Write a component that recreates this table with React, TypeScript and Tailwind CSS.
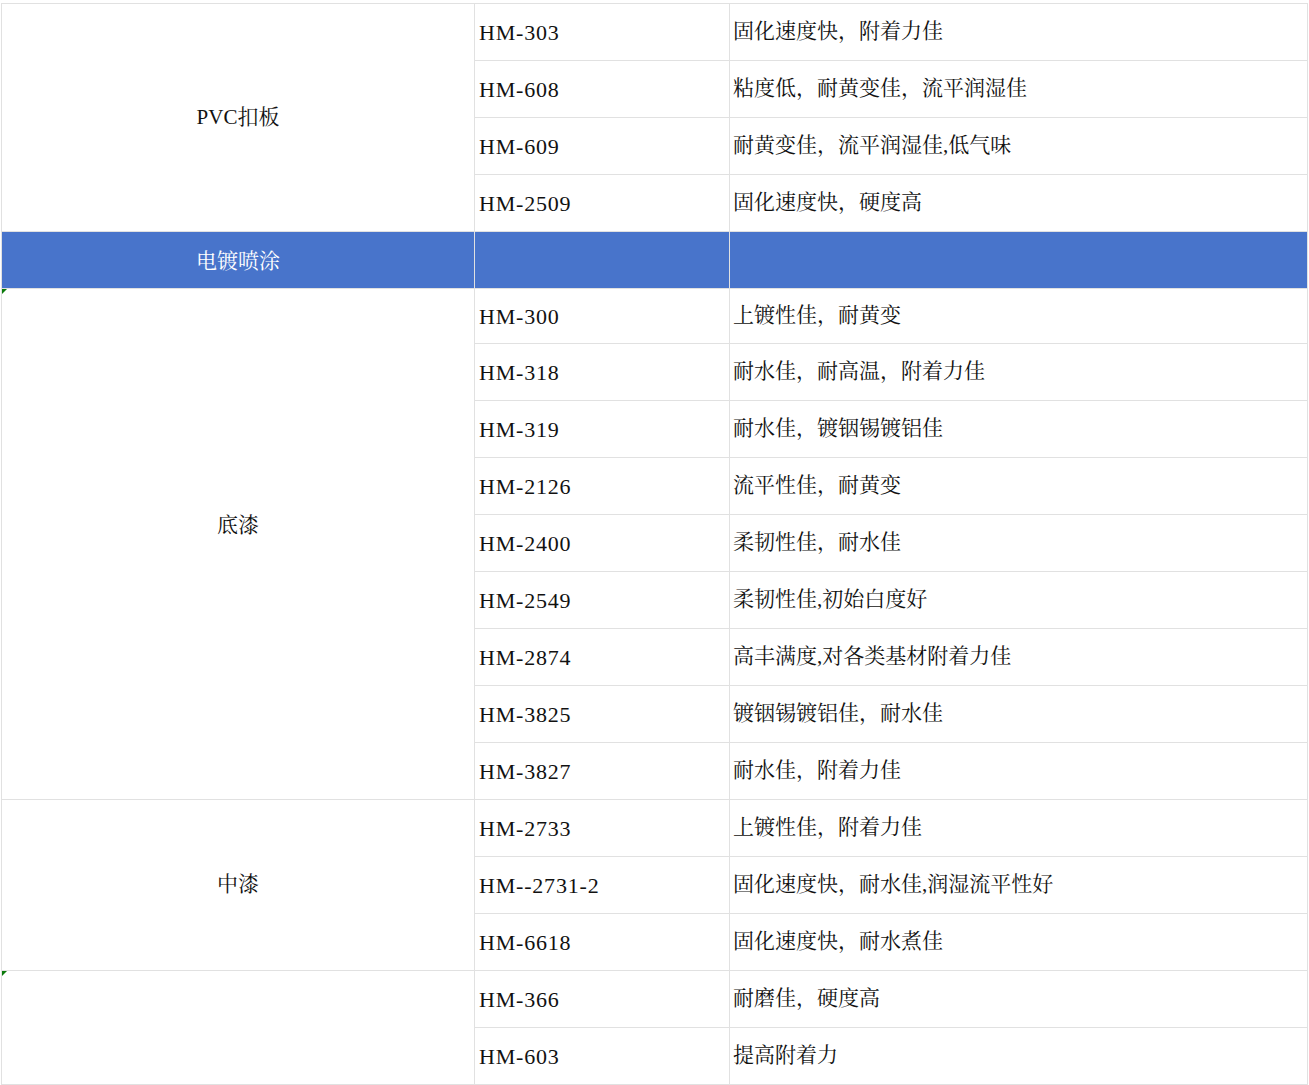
import React from 'react';

interface Group {
  name: string;
  flag?: boolean;
  labelPad?: string;
  items: [string, string][];
}

const groups: Group[] = [
  {
    name: 'PVC扣板',
    items: [
      ['HM-303', '固化速度快，附着力佳'],
      ['HM-608', '粘度低，耐黄变佳，流平润湿佳'],
      ['HM-609', '耐黄变佳，流平润湿佳,低气味'],
      ['HM-2509', '固化速度快，硬度高'],
    ],
  },
  {
    name: '底漆',
    flag: true,
    labelPad: 'pb-[36px]',
    items: [
      ['HM-300', '上镀性佳，耐黄变'],
      ['HM-318', '耐水佳，耐高温，附着力佳'],
      ['HM-319', '耐水佳，镀铟锡镀铝佳'],
      ['HM-2126', '流平性佳，耐黄变'],
      ['HM-2400', '柔韧性佳，耐水佳'],
      ['HM-2549', '柔韧性佳,初始白度好'],
      ['HM-2874', '高丰满度,对各类基材附着力佳'],
      ['HM-3825', '镀铟锡镀铝佳，耐水佳'],
      ['HM-3827', '耐水佳，附着力佳'],
    ],
  },
  {
    name: '中漆',
    items: [
      ['HM-2733', '上镀性佳，附着力佳'],
      ['HM--2731-2', '固化速度快，耐水佳,润湿流平性好'],
      ['HM-6618', '固化速度快，耐水煮佳'],
    ],
  },
  {
    name: '',
    flag: true,
    items: [
      ['HM-366', '耐磨佳，硬度高'],
      ['HM-603', '提高附着力'],
    ],
  },
];

const spans: Record<number, string> = {
  2: 'row-span-2',
  3: 'row-span-3',
  4: 'row-span-4',
  9: 'row-span-9',
};

const cell = 'border-r border-b border-[#e1e1e1] flex items-center';

const Flag = () => (
  <div className="absolute left-0 top-0 w-0 h-0 border-t-[5px] border-r-[5px] border-t-[#0b7a0b] border-r-transparent" />
);

const App: React.FC = () => {
  const renderGroup = (g: Group, gi: number) => (
    <React.Fragment key={gi}>
      {g.items.map((it, i) => (
        <React.Fragment key={it[0]}>
          {i === 0 && (
            <div
              className={`${cell} ${spans[g.items.length]} relative justify-center text-[21px] ${g.labelPad || ''}`}
            >
              {g.flag && <Flag />}
              {g.name}
            </div>
          )}
          <div className={`${cell} pl-[4px] text-[22px] tracking-[0.8px]`}>{it[0]}</div>
          <div className={`${cell} pl-[3px] text-[21px]`}>{it[1]}</div>
        </React.Fragment>
      ))}
    </React.Fragment>
  );

  return (
    <div
      className="bg-white min-h-screen pt-[3px] pl-[1px] text-[#111]"
      style={{ fontFamily: '"Liberation Serif", "Noto Serif CJK SC", "Noto Sans CJK SC", serif' }}
    >
      <div className="grid grid-cols-[473px_255px_578px] grid-rows-[repeat(5,57px)_55px_repeat(13,57px)] w-[1307px] border-l border-t border-[#e1e1e1]">
        {renderGroup(groups[0], 0)}
        <div className={`${cell} justify-center pt-[4px] bg-[#4874cb] text-white text-[21px]`}>电镀喷涂</div>
        <div className={`${cell} bg-[#4874cb]`} />
        <div className={`${cell} bg-[#4874cb]`} />
        {groups.slice(1).map((g, i) => renderGroup(g, i + 1))}
      </div>
    </div>
  );
};

export default App;
